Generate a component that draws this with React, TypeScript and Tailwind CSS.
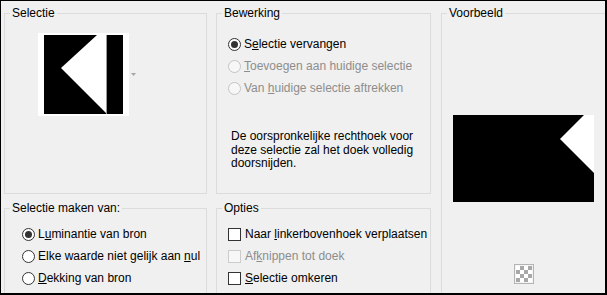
import React from 'react';

// Keuzerondje in Windows-stijl
const Radio = ({ checked = false, disabled = false }: { checked?: boolean; disabled?: boolean }) => (
  <span
    className={`flex h-[13px] w-[13px] shrink-0 items-center justify-center rounded-full border ${
      disabled ? 'border-[#c4c4c4] bg-[#f7f7f7]' : 'border-[#333333] bg-white'
    }`}
  >
    {checked && <span className="h-[7px] w-[7px] rounded-full bg-[#333333]" />}
  </span>
);

const Checkbox = ({ disabled = false }: { disabled?: boolean }) => (
  <span
    className={`block h-[13px] w-[13px] shrink-0 border ${
      disabled ? 'border-[#cccccc] bg-[#f7f7f7]' : 'border-[#333333] bg-white'
    }`}
  />
);

const Group = ({
  title,
  className = '',
  children,
}: {
  title: string;
  className?: string;
  children?: React.ReactNode;
}) => (
  <fieldset className={`min-w-0 shrink-0 border border-[#dcdcdc] ${className}`}>
    <legend className="ml-[5px] px-[2px] leading-[15px] text-black">{title}</legend>
    {children}
  </fieldset>
);

const Row = ({ children, disabled = false }: { children: React.ReactNode; disabled?: boolean }) => (
  <div className={`flex h-[22px] items-center gap-[3px] leading-[15px] ${disabled ? 'text-[#8d8d8d]' : 'text-black'}`}>
    {children}
  </div>
);

// Miniatuur van de bron
const SourceThumb = () => (
  <div className="flex items-center">
    <div className="h-[83px] w-[91px] bg-white pl-[6px] pt-[2px]">
      <svg width="79" height="79" viewBox="0 0 79 79" className="block">
        <rect width="79" height="79" fill="#000" />
        <polygon points="17,33 53,0 63,0 63,79" fill="#fff" />
        <rect x="62" y="0" width="1" height="79" fill="#9a9a9a" />
      </svg>
    </div>
    <svg width="5" height="3" viewBox="0 0 5 3" className="ml-[2px] block">
      <polygon points="0,0 5,0 2.5,3" fill="#a6a6a6" />
    </svg>
  </div>
);

const Preview = () => (
  <svg width="141" height="87" viewBox="0 0 141 87" className="block">
    <rect width="141" height="87" fill="#000" />
    <polygon points="131,0 141,0 141,58 107,24" fill="#fff" />
  </svg>
);

const Checker = () => (
  <svg width="20" height="20" viewBox="0 0 20 20" className="block">
    <rect x="0.5" y="0.5" width="19" height="19" fill="#f4f4f4" stroke="#b4b4b4" />
    {[0, 1, 2, 3].map((r) =>
      [0, 1, 2, 3].map((c) => (
        <rect key={`${r}-${c}`} x={2 + c * 4} y={2 + r * 4} width="4" height="4" fill={(r + c) % 2 === 0 ? '#ffffff' : '#a8a8a8'} />
      ))
    )}
  </svg>
);

export default function App() {
  return (
    <div className="h-[295px] w-[607px] overflow-hidden border-t border-l border-r-2 border-b-2 border-black bg-[#f0f0f0] font-['Liberation_Sans',Arial,sans-serif] text-[12px]">
      <div className="flex pl-[3px] pt-[5px]">
        {/* Linkerkolom */}
        <div className="flex w-[203px] shrink-0 flex-col gap-[7px]">
          <Group title="Selectie" className="h-[188px]">
            <div className="ml-[33px] mt-[12px]">
              <SourceThumb />
            </div>
          </Group>
          <Group title="Selectie maken van:" className="h-[100px]">
            <div className="ml-[17px] mt-[7px]">
              <Row>
                <Radio checked />
                <span>
                  L<u>u</u>minantie van bron
                </span>
              </Row>
              <Row>
                <Radio />
                <span>
                  Elke waarde niet gelijk aan <u>n</u>ul
                </span>
              </Row>
              <Row>
                <Radio />
                <span>
                  <u>D</u>ekking van bron
                </span>
              </Row>
            </div>
          </Group>
        </div>

        {/* Middenkolom */}
        <div className="ml-[9px] flex w-[215px] shrink-0 flex-col gap-[7px]">
          <Group title="Bewerking" className="h-[188px]">
            <div className="ml-[11px] mt-[12px]">
              <Row>
                <Radio checked />
                <span>
                  S<u>e</u>lectie vervangen
                </span>
              </Row>
              <Row disabled>
                <Radio disabled />
                <span>
                  <u>T</u>oevoegen aan huidige selectie
                </span>
              </Row>
              <Row disabled>
                <Radio disabled />
                <span>
                  Van <u>h</u>uidige selectie aftrekken
                </span>
              </Row>
            </div>
            <p className="ml-[14px] mt-[31px] w-[190px] leading-[13.5px] text-black">
              De oorspronkelijke rechthoek voor deze selectie zal het doek volledig doorsnijden.
            </p>
          </Group>
          <Group title="Opties" className="h-[100px]">
            <div className="ml-[11px] mt-[7px]">
              <Row>
                <Checkbox />
                <span className="ml-[1px]">
                  Naar <u>l</u>inkerbovenhoek verplaatsen
                </span>
              </Row>
              <Row disabled>
                <Checkbox disabled />
                <span className="ml-[1px]">
                  Af<u>k</u>nippen tot doek
                </span>
              </Row>
              <Row>
                <Checkbox />
                <span className="ml-[1px]">
                  <u>S</u>electie omkeren
                </span>
              </Row>
            </div>
          </Group>
        </div>

        {/* Voorbeeld: loopt rechts en onder buiten beeld */}
        <Group title="Voorbeeld" className="ml-[10px] h-[300px] w-[174px] pr-[9px]">
          <div className="flex flex-col items-center">
            <div className="mt-[94px]">
              <Preview />
            </div>
            <div className="mt-[62px]">
              <Checker />
            </div>
          </div>
        </Group>
      </div>
    </div>
  );
}
